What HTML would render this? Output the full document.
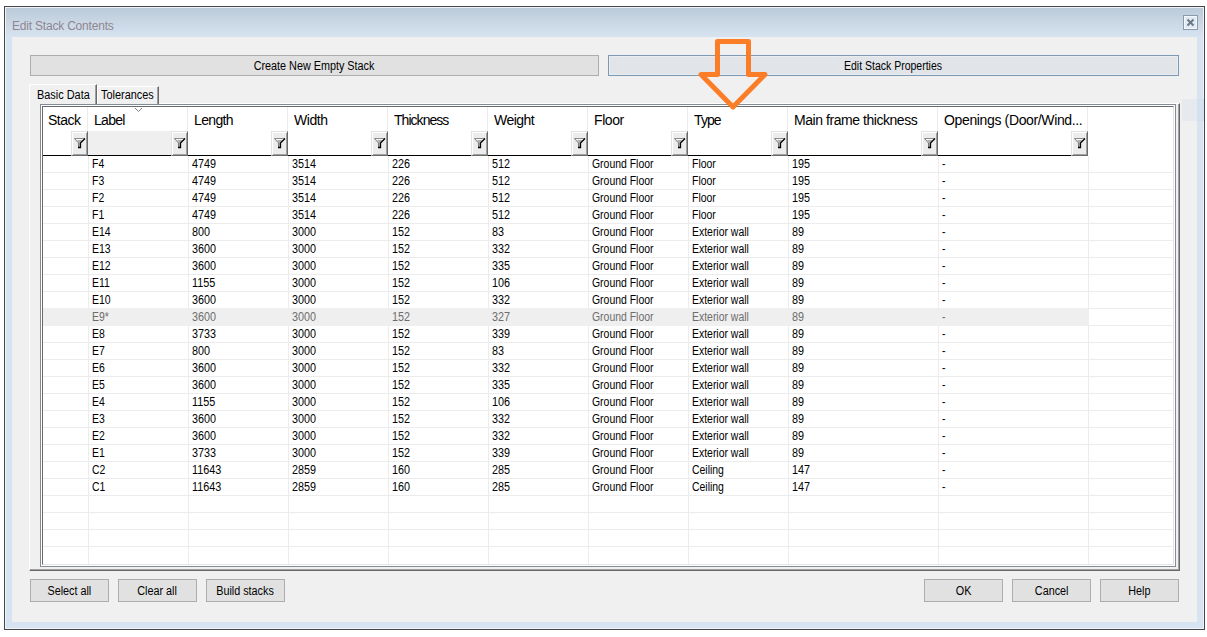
<!DOCTYPE html>
<html><head><meta charset="utf-8">
<style>
*{margin:0;padding:0;box-sizing:border-box}
html,body{width:1207px;height:637px;overflow:hidden;background:#fff;font-family:"Liberation Sans",sans-serif;position:relative}
div,span{position:absolute}
.t{white-space:nowrap;color:#000}
.frame{left:4px;top:6px;width:1201px;height:624px;border:1px solid #484848;background:#d6e3f1}
.hl{left:5px;top:7px;width:1199px;height:622px;border:1px solid #eef3f9}
.tbar{left:6px;top:8px;width:1197px;height:29px;background:linear-gradient(#bccbd9,#d7e3f0)}
.content{left:12px;top:37px;width:1185px;height:585px;background:#f0f0f0}
.title{left:12px;top:19px;font-size:12px;color:#8e8690;letter-spacing:-0.2px}
.close{left:1183px;top:15px;width:15px;height:15px;border:1px solid #8c99a6;background:#dfe9f4;box-shadow:inset 0 0 0 1px #f4f8fc}
.btn{border:1px solid #adadad;background:#e1e1e1;font-size:12px;text-align:center;color:#000;white-space:nowrap}
b.s{font-weight:normal;display:inline-block;transform:scaleX(0.9);transform-origin:50% 50%}
.btnd{border:1px solid #7c9ab4;background:#e1e4e8;box-shadow:inset 0 0 0 1px #eaecef}
.tab{font-size:12px;white-space:nowrap;background:#f0f0f0}
.grid{left:40px;top:104px;width:1136px;height:463px;border:1px solid #848b96;background:#fff}
.gin{left:42px;top:106px;width:1132px;height:459px;border-left:1px solid #6a6a6a;border-top:1px solid #6a6a6a;border-bottom:1px solid #e3e3e3;border-right:1px solid #e3e3e3}
.hd{font-size:14px;letter-spacing:-0.42px;top:112px;color:#000;white-space:nowrap}
.vl{width:1px;background:#ececec}
.hl2{height:1px;background:#ececec}
.fb{width:17px;height:25px;top:131px;background:#ececec;border-top:1px solid #e2e2e2;border-left:1px solid #e2e2e2;border-right:1px solid #6a6a6a;border-bottom:1px solid #6a6a6a;box-shadow:inset 1px 1px 0 #fff,inset -1px -1px 0 #a0a0a0}
.c{font-size:12px;white-space:nowrap;color:#000;top:0;transform-origin:0 0}
</style></head><body>
<div class="frame"></div>
<div class="hl"></div>
<div class="tbar"></div>
<div class="content"></div>
<div class="t title">Edit Stack Contents</div>
<div class="close"><svg width="13" height="13" style="position:absolute;left:0;top:0"><path d="M3.5 3.5L9.5 9.5M9.5 3.5L3.5 9.5" stroke="#6a7683" stroke-width="1.9"/></svg></div>
<div class="btn" style="left:30px;top:55px;width:569px;height:21px;line-height:21px"><b class="s">Create New Empty Stack</b></div>
<div class="btn btnd" style="left:608px;top:55px;width:571px;height:21px;line-height:21px"><b class="s" style="transform:scaleX(0.875)">Edit Stack Properties</b></div>

<div style="left:1182px;top:99px;width:15px;height:22px;background:#e6eaef"></div>
<div style="left:1197px;top:99px;width:7px;height:22px;background:#d2e0ef"></div>
<div style="left:29px;top:103px;width:1151px;height:468px;border-left:1px solid #fff;border-top:1px solid #fff;border-right:1px solid #696969;border-bottom:1px solid #696969;box-shadow:inset -1px -1px 0 #a0a0a0;background:#f0f0f0"></div>
<div class="tab" style="left:29px;top:84px;width:68px;height:21px;border-left:1px solid #fff;border-top:1px solid #fff;border-right:1px solid #696969;box-shadow:inset -1px 0 0 #a0a0a0;border-top-left-radius:2px"><span class="t" style="left:7px;top:3px;transform:scaleX(0.91);transform-origin:0 0">Basic Data</span></div>
<div class="tab" style="left:97px;top:86px;width:62px;height:18px;border-left:1px solid #fff;border-top:1px solid #fff;border-right:1px solid #696969;box-shadow:inset -1px 0 0 #a0a0a0"><span class="t" style="left:3px;top:1px;transform:scaleX(0.91);transform-origin:0 0">Tolerances</span></div>
<div class="grid"></div><div class="gin"></div>
<div style="left:88px;top:131px;width:100px;height:24px;background:#efefef"></div>
<div class="vl" style="left:87px;top:107px;height:24px"></div>
<div class="vl" style="left:88px;top:156px;height:408px"></div>
<div class="vl" style="left:187px;top:107px;height:24px"></div>
<div class="vl" style="left:188px;top:156px;height:408px"></div>
<div class="vl" style="left:287px;top:107px;height:24px"></div>
<div class="vl" style="left:288px;top:156px;height:408px"></div>
<div class="vl" style="left:387px;top:107px;height:24px"></div>
<div class="vl" style="left:388px;top:156px;height:408px"></div>
<div class="vl" style="left:487px;top:107px;height:24px"></div>
<div class="vl" style="left:488px;top:156px;height:408px"></div>
<div class="vl" style="left:587px;top:107px;height:24px"></div>
<div class="vl" style="left:588px;top:156px;height:408px"></div>
<div class="vl" style="left:687px;top:107px;height:24px"></div>
<div class="vl" style="left:688px;top:156px;height:408px"></div>
<div class="vl" style="left:787px;top:107px;height:24px"></div>
<div class="vl" style="left:788px;top:156px;height:408px"></div>
<div class="vl" style="left:937px;top:107px;height:24px"></div>
<div class="vl" style="left:938px;top:156px;height:408px"></div>
<div class="vl" style="left:1087px;top:107px;height:24px"></div>
<div class="vl" style="left:1088px;top:156px;height:408px"></div>
<div class="hl2" style="left:43px;top:172px;width:1131px"></div>
<div class="hl2" style="left:43px;top:189px;width:1131px"></div>
<div class="hl2" style="left:43px;top:206px;width:1131px"></div>
<div class="hl2" style="left:43px;top:223px;width:1131px"></div>
<div class="hl2" style="left:43px;top:240px;width:1131px"></div>
<div class="hl2" style="left:43px;top:257px;width:1131px"></div>
<div class="hl2" style="left:43px;top:274px;width:1131px"></div>
<div class="hl2" style="left:43px;top:291px;width:1131px"></div>
<div class="hl2" style="left:43px;top:308px;width:1131px"></div>
<div class="hl2" style="left:43px;top:325px;width:1131px"></div>
<div class="hl2" style="left:43px;top:342px;width:1131px"></div>
<div class="hl2" style="left:43px;top:359px;width:1131px"></div>
<div class="hl2" style="left:43px;top:376px;width:1131px"></div>
<div class="hl2" style="left:43px;top:393px;width:1131px"></div>
<div class="hl2" style="left:43px;top:410px;width:1131px"></div>
<div class="hl2" style="left:43px;top:427px;width:1131px"></div>
<div class="hl2" style="left:43px;top:444px;width:1131px"></div>
<div class="hl2" style="left:43px;top:461px;width:1131px"></div>
<div class="hl2" style="left:43px;top:478px;width:1131px"></div>
<div class="hl2" style="left:43px;top:495px;width:1131px"></div>
<div class="hl2" style="left:43px;top:512px;width:1131px"></div>
<div class="hl2" style="left:43px;top:529px;width:1131px"></div>
<div class="hl2" style="left:43px;top:546px;width:1131px"></div>
<div style="left:43px;top:308px;width:1046px;height:18px;background:#efefef"></div>
<div class="hd" style="left:48px;letter-spacing:-0.5px">Stack</div>
<div class="hd" style="left:94px;letter-spacing:-0.72px">Label</div>
<div class="hd" style="left:194px;letter-spacing:-0.66px">Length</div>
<div class="hd" style="left:294px;letter-spacing:-0.42px">Width</div>
<div class="hd" style="left:394px;letter-spacing:-0.96px">Thickness</div>
<div class="hd" style="left:494px;letter-spacing:-0.56px">Weight</div>
<div class="hd" style="left:594px;letter-spacing:-0.42px">Floor</div>
<div class="hd" style="left:694px;letter-spacing:-0.9px">Type</div>
<div class="hd" style="left:794px;letter-spacing:-0.45px">Main frame thickness</div>
<div class="hd" style="left:944px;letter-spacing:-0.36px">Openings (Door/Wind...</div>
<div style="left:43px;top:155px;width:1045px;height:1px;background:#000"></div>
<div class="fb" style="left:71px"><svg width="17" height="25" style="position:absolute;left:-1px;top:-1px"><path d="M3.5 7.5H14L9.5 12V16.5H7.5V12Z" fill="#fafafa"/><path d="M6 9H12L9 12V16H8V12Z" fill="#b0b0b0"/><path d="M3.5 7.5H14" stroke="#8a8a8a" stroke-width="1"/><path d="M3.5 7.5L7.5 12V16.5" fill="none" stroke="#7a7a7a" stroke-width="1"/><path d="M14 7.5L9.5 12V16.5H7" fill="none" stroke="#000" stroke-width="1.3"/></svg></div>
<div class="fb" style="left:171px"><svg width="17" height="25" style="position:absolute;left:-1px;top:-1px"><path d="M3.5 7.5H14L9.5 12V16.5H7.5V12Z" fill="#fafafa"/><path d="M6 9H12L9 12V16H8V12Z" fill="#b0b0b0"/><path d="M3.5 7.5H14" stroke="#8a8a8a" stroke-width="1"/><path d="M3.5 7.5L7.5 12V16.5" fill="none" stroke="#7a7a7a" stroke-width="1"/><path d="M14 7.5L9.5 12V16.5H7" fill="none" stroke="#000" stroke-width="1.3"/></svg></div>
<div class="fb" style="left:271px"><svg width="17" height="25" style="position:absolute;left:-1px;top:-1px"><path d="M3.5 7.5H14L9.5 12V16.5H7.5V12Z" fill="#fafafa"/><path d="M6 9H12L9 12V16H8V12Z" fill="#b0b0b0"/><path d="M3.5 7.5H14" stroke="#8a8a8a" stroke-width="1"/><path d="M3.5 7.5L7.5 12V16.5" fill="none" stroke="#7a7a7a" stroke-width="1"/><path d="M14 7.5L9.5 12V16.5H7" fill="none" stroke="#000" stroke-width="1.3"/></svg></div>
<div class="fb" style="left:371px"><svg width="17" height="25" style="position:absolute;left:-1px;top:-1px"><path d="M3.5 7.5H14L9.5 12V16.5H7.5V12Z" fill="#fafafa"/><path d="M6 9H12L9 12V16H8V12Z" fill="#b0b0b0"/><path d="M3.5 7.5H14" stroke="#8a8a8a" stroke-width="1"/><path d="M3.5 7.5L7.5 12V16.5" fill="none" stroke="#7a7a7a" stroke-width="1"/><path d="M14 7.5L9.5 12V16.5H7" fill="none" stroke="#000" stroke-width="1.3"/></svg></div>
<div class="fb" style="left:471px"><svg width="17" height="25" style="position:absolute;left:-1px;top:-1px"><path d="M3.5 7.5H14L9.5 12V16.5H7.5V12Z" fill="#fafafa"/><path d="M6 9H12L9 12V16H8V12Z" fill="#b0b0b0"/><path d="M3.5 7.5H14" stroke="#8a8a8a" stroke-width="1"/><path d="M3.5 7.5L7.5 12V16.5" fill="none" stroke="#7a7a7a" stroke-width="1"/><path d="M14 7.5L9.5 12V16.5H7" fill="none" stroke="#000" stroke-width="1.3"/></svg></div>
<div class="fb" style="left:571px"><svg width="17" height="25" style="position:absolute;left:-1px;top:-1px"><path d="M3.5 7.5H14L9.5 12V16.5H7.5V12Z" fill="#fafafa"/><path d="M6 9H12L9 12V16H8V12Z" fill="#b0b0b0"/><path d="M3.5 7.5H14" stroke="#8a8a8a" stroke-width="1"/><path d="M3.5 7.5L7.5 12V16.5" fill="none" stroke="#7a7a7a" stroke-width="1"/><path d="M14 7.5L9.5 12V16.5H7" fill="none" stroke="#000" stroke-width="1.3"/></svg></div>
<div class="fb" style="left:671px"><svg width="17" height="25" style="position:absolute;left:-1px;top:-1px"><path d="M3.5 7.5H14L9.5 12V16.5H7.5V12Z" fill="#fafafa"/><path d="M6 9H12L9 12V16H8V12Z" fill="#b0b0b0"/><path d="M3.5 7.5H14" stroke="#8a8a8a" stroke-width="1"/><path d="M3.5 7.5L7.5 12V16.5" fill="none" stroke="#7a7a7a" stroke-width="1"/><path d="M14 7.5L9.5 12V16.5H7" fill="none" stroke="#000" stroke-width="1.3"/></svg></div>
<div class="fb" style="left:771px"><svg width="17" height="25" style="position:absolute;left:-1px;top:-1px"><path d="M3.5 7.5H14L9.5 12V16.5H7.5V12Z" fill="#fafafa"/><path d="M6 9H12L9 12V16H8V12Z" fill="#b0b0b0"/><path d="M3.5 7.5H14" stroke="#8a8a8a" stroke-width="1"/><path d="M3.5 7.5L7.5 12V16.5" fill="none" stroke="#7a7a7a" stroke-width="1"/><path d="M14 7.5L9.5 12V16.5H7" fill="none" stroke="#000" stroke-width="1.3"/></svg></div>
<div class="fb" style="left:921px"><svg width="17" height="25" style="position:absolute;left:-1px;top:-1px"><path d="M3.5 7.5H14L9.5 12V16.5H7.5V12Z" fill="#fafafa"/><path d="M6 9H12L9 12V16H8V12Z" fill="#b0b0b0"/><path d="M3.5 7.5H14" stroke="#8a8a8a" stroke-width="1"/><path d="M3.5 7.5L7.5 12V16.5" fill="none" stroke="#7a7a7a" stroke-width="1"/><path d="M14 7.5L9.5 12V16.5H7" fill="none" stroke="#000" stroke-width="1.3"/></svg></div>
<div class="fb" style="left:1071px"><svg width="17" height="25" style="position:absolute;left:-1px;top:-1px"><path d="M3.5 7.5H14L9.5 12V16.5H7.5V12Z" fill="#fafafa"/><path d="M6 9H12L9 12V16H8V12Z" fill="#b0b0b0"/><path d="M3.5 7.5H14" stroke="#8a8a8a" stroke-width="1"/><path d="M3.5 7.5L7.5 12V16.5" fill="none" stroke="#7a7a7a" stroke-width="1"/><path d="M14 7.5L9.5 12V16.5H7" fill="none" stroke="#000" stroke-width="1.3"/></svg></div>
<div class="c" style="left:92px;top:157px;color:#000;transform:scaleX(0.87);">F4</div>
<div class="c" style="left:192px;top:157px;color:#000;transform:scaleX(0.9);">4749</div>
<div class="c" style="left:292px;top:157px;color:#000;transform:scaleX(0.9);">3514</div>
<div class="c" style="left:392px;top:157px;color:#000;transform:scaleX(0.9);">226</div>
<div class="c" style="left:492px;top:157px;color:#000;transform:scaleX(0.9);">512</div>
<div class="c" style="left:592px;top:157px;color:#000;transform:scaleX(0.87);">Ground Floor</div>
<div class="c" style="left:692px;top:157px;color:#000;transform:scaleX(0.87);">Floor</div>
<div class="c" style="left:792px;top:157px;color:#000;transform:scaleX(0.9);">195</div>
<div class="c" style="left:942px;top:157px;color:#000;transform:scaleX(0.87);">-</div>
<div class="c" style="left:92px;top:174px;color:#000;transform:scaleX(0.87);">F3</div>
<div class="c" style="left:192px;top:174px;color:#000;transform:scaleX(0.9);">4749</div>
<div class="c" style="left:292px;top:174px;color:#000;transform:scaleX(0.9);">3514</div>
<div class="c" style="left:392px;top:174px;color:#000;transform:scaleX(0.9);">226</div>
<div class="c" style="left:492px;top:174px;color:#000;transform:scaleX(0.9);">512</div>
<div class="c" style="left:592px;top:174px;color:#000;transform:scaleX(0.87);">Ground Floor</div>
<div class="c" style="left:692px;top:174px;color:#000;transform:scaleX(0.87);">Floor</div>
<div class="c" style="left:792px;top:174px;color:#000;transform:scaleX(0.9);">195</div>
<div class="c" style="left:942px;top:174px;color:#000;transform:scaleX(0.87);">-</div>
<div class="c" style="left:92px;top:191px;color:#000;transform:scaleX(0.87);">F2</div>
<div class="c" style="left:192px;top:191px;color:#000;transform:scaleX(0.9);">4749</div>
<div class="c" style="left:292px;top:191px;color:#000;transform:scaleX(0.9);">3514</div>
<div class="c" style="left:392px;top:191px;color:#000;transform:scaleX(0.9);">226</div>
<div class="c" style="left:492px;top:191px;color:#000;transform:scaleX(0.9);">512</div>
<div class="c" style="left:592px;top:191px;color:#000;transform:scaleX(0.87);">Ground Floor</div>
<div class="c" style="left:692px;top:191px;color:#000;transform:scaleX(0.87);">Floor</div>
<div class="c" style="left:792px;top:191px;color:#000;transform:scaleX(0.9);">195</div>
<div class="c" style="left:942px;top:191px;color:#000;transform:scaleX(0.87);">-</div>
<div class="c" style="left:92px;top:208px;color:#000;transform:scaleX(0.87);">F1</div>
<div class="c" style="left:192px;top:208px;color:#000;transform:scaleX(0.9);">4749</div>
<div class="c" style="left:292px;top:208px;color:#000;transform:scaleX(0.9);">3514</div>
<div class="c" style="left:392px;top:208px;color:#000;transform:scaleX(0.9);">226</div>
<div class="c" style="left:492px;top:208px;color:#000;transform:scaleX(0.9);">512</div>
<div class="c" style="left:592px;top:208px;color:#000;transform:scaleX(0.87);">Ground Floor</div>
<div class="c" style="left:692px;top:208px;color:#000;transform:scaleX(0.87);">Floor</div>
<div class="c" style="left:792px;top:208px;color:#000;transform:scaleX(0.9);">195</div>
<div class="c" style="left:942px;top:208px;color:#000;transform:scaleX(0.87);">-</div>
<div class="c" style="left:92px;top:225px;color:#000;transform:scaleX(0.87);">E14</div>
<div class="c" style="left:192px;top:225px;color:#000;transform:scaleX(0.9);">800</div>
<div class="c" style="left:292px;top:225px;color:#000;transform:scaleX(0.9);">3000</div>
<div class="c" style="left:392px;top:225px;color:#000;transform:scaleX(0.9);">152</div>
<div class="c" style="left:492px;top:225px;color:#000;transform:scaleX(0.9);">83</div>
<div class="c" style="left:592px;top:225px;color:#000;transform:scaleX(0.87);">Ground Floor</div>
<div class="c" style="left:692px;top:225px;color:#000;transform:scaleX(0.87);">Exterior wall</div>
<div class="c" style="left:792px;top:225px;color:#000;transform:scaleX(0.9);">89</div>
<div class="c" style="left:942px;top:225px;color:#000;transform:scaleX(0.87);">-</div>
<div class="c" style="left:92px;top:242px;color:#000;transform:scaleX(0.87);">E13</div>
<div class="c" style="left:192px;top:242px;color:#000;transform:scaleX(0.9);">3600</div>
<div class="c" style="left:292px;top:242px;color:#000;transform:scaleX(0.9);">3000</div>
<div class="c" style="left:392px;top:242px;color:#000;transform:scaleX(0.9);">152</div>
<div class="c" style="left:492px;top:242px;color:#000;transform:scaleX(0.9);">332</div>
<div class="c" style="left:592px;top:242px;color:#000;transform:scaleX(0.87);">Ground Floor</div>
<div class="c" style="left:692px;top:242px;color:#000;transform:scaleX(0.87);">Exterior wall</div>
<div class="c" style="left:792px;top:242px;color:#000;transform:scaleX(0.9);">89</div>
<div class="c" style="left:942px;top:242px;color:#000;transform:scaleX(0.87);">-</div>
<div class="c" style="left:92px;top:259px;color:#000;transform:scaleX(0.87);">E12</div>
<div class="c" style="left:192px;top:259px;color:#000;transform:scaleX(0.9);">3600</div>
<div class="c" style="left:292px;top:259px;color:#000;transform:scaleX(0.9);">3000</div>
<div class="c" style="left:392px;top:259px;color:#000;transform:scaleX(0.9);">152</div>
<div class="c" style="left:492px;top:259px;color:#000;transform:scaleX(0.9);">335</div>
<div class="c" style="left:592px;top:259px;color:#000;transform:scaleX(0.87);">Ground Floor</div>
<div class="c" style="left:692px;top:259px;color:#000;transform:scaleX(0.87);">Exterior wall</div>
<div class="c" style="left:792px;top:259px;color:#000;transform:scaleX(0.9);">89</div>
<div class="c" style="left:942px;top:259px;color:#000;transform:scaleX(0.87);">-</div>
<div class="c" style="left:92px;top:276px;color:#000;transform:scaleX(0.87);">E11</div>
<div class="c" style="left:192px;top:276px;color:#000;transform:scaleX(0.9);">1155</div>
<div class="c" style="left:292px;top:276px;color:#000;transform:scaleX(0.9);">3000</div>
<div class="c" style="left:392px;top:276px;color:#000;transform:scaleX(0.9);">152</div>
<div class="c" style="left:492px;top:276px;color:#000;transform:scaleX(0.9);">106</div>
<div class="c" style="left:592px;top:276px;color:#000;transform:scaleX(0.87);">Ground Floor</div>
<div class="c" style="left:692px;top:276px;color:#000;transform:scaleX(0.87);">Exterior wall</div>
<div class="c" style="left:792px;top:276px;color:#000;transform:scaleX(0.9);">89</div>
<div class="c" style="left:942px;top:276px;color:#000;transform:scaleX(0.87);">-</div>
<div class="c" style="left:92px;top:293px;color:#000;transform:scaleX(0.87);">E10</div>
<div class="c" style="left:192px;top:293px;color:#000;transform:scaleX(0.9);">3600</div>
<div class="c" style="left:292px;top:293px;color:#000;transform:scaleX(0.9);">3000</div>
<div class="c" style="left:392px;top:293px;color:#000;transform:scaleX(0.9);">152</div>
<div class="c" style="left:492px;top:293px;color:#000;transform:scaleX(0.9);">332</div>
<div class="c" style="left:592px;top:293px;color:#000;transform:scaleX(0.87);">Ground Floor</div>
<div class="c" style="left:692px;top:293px;color:#000;transform:scaleX(0.87);">Exterior wall</div>
<div class="c" style="left:792px;top:293px;color:#000;transform:scaleX(0.9);">89</div>
<div class="c" style="left:942px;top:293px;color:#000;transform:scaleX(0.87);">-</div>
<div class="c" style="left:92px;top:310px;color:#6d6d6d;transform:scaleX(0.87);">E9*</div>
<div class="c" style="left:192px;top:310px;color:#6d6d6d;transform:scaleX(0.9);">3600</div>
<div class="c" style="left:292px;top:310px;color:#6d6d6d;transform:scaleX(0.9);">3000</div>
<div class="c" style="left:392px;top:310px;color:#6d6d6d;transform:scaleX(0.9);">152</div>
<div class="c" style="left:492px;top:310px;color:#6d6d6d;transform:scaleX(0.9);">327</div>
<div class="c" style="left:592px;top:310px;color:#6d6d6d;transform:scaleX(0.87);">Ground Floor</div>
<div class="c" style="left:692px;top:310px;color:#6d6d6d;transform:scaleX(0.87);">Exterior wall</div>
<div class="c" style="left:792px;top:310px;color:#6d6d6d;transform:scaleX(0.9);">89</div>
<div class="c" style="left:942px;top:310px;color:#6d6d6d;transform:scaleX(0.87);">-</div>
<div class="c" style="left:92px;top:327px;color:#000;transform:scaleX(0.87);">E8</div>
<div class="c" style="left:192px;top:327px;color:#000;transform:scaleX(0.9);">3733</div>
<div class="c" style="left:292px;top:327px;color:#000;transform:scaleX(0.9);">3000</div>
<div class="c" style="left:392px;top:327px;color:#000;transform:scaleX(0.9);">152</div>
<div class="c" style="left:492px;top:327px;color:#000;transform:scaleX(0.9);">339</div>
<div class="c" style="left:592px;top:327px;color:#000;transform:scaleX(0.87);">Ground Floor</div>
<div class="c" style="left:692px;top:327px;color:#000;transform:scaleX(0.87);">Exterior wall</div>
<div class="c" style="left:792px;top:327px;color:#000;transform:scaleX(0.9);">89</div>
<div class="c" style="left:942px;top:327px;color:#000;transform:scaleX(0.87);">-</div>
<div class="c" style="left:92px;top:344px;color:#000;transform:scaleX(0.87);">E7</div>
<div class="c" style="left:192px;top:344px;color:#000;transform:scaleX(0.9);">800</div>
<div class="c" style="left:292px;top:344px;color:#000;transform:scaleX(0.9);">3000</div>
<div class="c" style="left:392px;top:344px;color:#000;transform:scaleX(0.9);">152</div>
<div class="c" style="left:492px;top:344px;color:#000;transform:scaleX(0.9);">83</div>
<div class="c" style="left:592px;top:344px;color:#000;transform:scaleX(0.87);">Ground Floor</div>
<div class="c" style="left:692px;top:344px;color:#000;transform:scaleX(0.87);">Exterior wall</div>
<div class="c" style="left:792px;top:344px;color:#000;transform:scaleX(0.9);">89</div>
<div class="c" style="left:942px;top:344px;color:#000;transform:scaleX(0.87);">-</div>
<div class="c" style="left:92px;top:361px;color:#000;transform:scaleX(0.87);">E6</div>
<div class="c" style="left:192px;top:361px;color:#000;transform:scaleX(0.9);">3600</div>
<div class="c" style="left:292px;top:361px;color:#000;transform:scaleX(0.9);">3000</div>
<div class="c" style="left:392px;top:361px;color:#000;transform:scaleX(0.9);">152</div>
<div class="c" style="left:492px;top:361px;color:#000;transform:scaleX(0.9);">332</div>
<div class="c" style="left:592px;top:361px;color:#000;transform:scaleX(0.87);">Ground Floor</div>
<div class="c" style="left:692px;top:361px;color:#000;transform:scaleX(0.87);">Exterior wall</div>
<div class="c" style="left:792px;top:361px;color:#000;transform:scaleX(0.9);">89</div>
<div class="c" style="left:942px;top:361px;color:#000;transform:scaleX(0.87);">-</div>
<div class="c" style="left:92px;top:378px;color:#000;transform:scaleX(0.87);">E5</div>
<div class="c" style="left:192px;top:378px;color:#000;transform:scaleX(0.9);">3600</div>
<div class="c" style="left:292px;top:378px;color:#000;transform:scaleX(0.9);">3000</div>
<div class="c" style="left:392px;top:378px;color:#000;transform:scaleX(0.9);">152</div>
<div class="c" style="left:492px;top:378px;color:#000;transform:scaleX(0.9);">335</div>
<div class="c" style="left:592px;top:378px;color:#000;transform:scaleX(0.87);">Ground Floor</div>
<div class="c" style="left:692px;top:378px;color:#000;transform:scaleX(0.87);">Exterior wall</div>
<div class="c" style="left:792px;top:378px;color:#000;transform:scaleX(0.9);">89</div>
<div class="c" style="left:942px;top:378px;color:#000;transform:scaleX(0.87);">-</div>
<div class="c" style="left:92px;top:395px;color:#000;transform:scaleX(0.87);">E4</div>
<div class="c" style="left:192px;top:395px;color:#000;transform:scaleX(0.9);">1155</div>
<div class="c" style="left:292px;top:395px;color:#000;transform:scaleX(0.9);">3000</div>
<div class="c" style="left:392px;top:395px;color:#000;transform:scaleX(0.9);">152</div>
<div class="c" style="left:492px;top:395px;color:#000;transform:scaleX(0.9);">106</div>
<div class="c" style="left:592px;top:395px;color:#000;transform:scaleX(0.87);">Ground Floor</div>
<div class="c" style="left:692px;top:395px;color:#000;transform:scaleX(0.87);">Exterior wall</div>
<div class="c" style="left:792px;top:395px;color:#000;transform:scaleX(0.9);">89</div>
<div class="c" style="left:942px;top:395px;color:#000;transform:scaleX(0.87);">-</div>
<div class="c" style="left:92px;top:412px;color:#000;transform:scaleX(0.87);">E3</div>
<div class="c" style="left:192px;top:412px;color:#000;transform:scaleX(0.9);">3600</div>
<div class="c" style="left:292px;top:412px;color:#000;transform:scaleX(0.9);">3000</div>
<div class="c" style="left:392px;top:412px;color:#000;transform:scaleX(0.9);">152</div>
<div class="c" style="left:492px;top:412px;color:#000;transform:scaleX(0.9);">332</div>
<div class="c" style="left:592px;top:412px;color:#000;transform:scaleX(0.87);">Ground Floor</div>
<div class="c" style="left:692px;top:412px;color:#000;transform:scaleX(0.87);">Exterior wall</div>
<div class="c" style="left:792px;top:412px;color:#000;transform:scaleX(0.9);">89</div>
<div class="c" style="left:942px;top:412px;color:#000;transform:scaleX(0.87);">-</div>
<div class="c" style="left:92px;top:429px;color:#000;transform:scaleX(0.87);">E2</div>
<div class="c" style="left:192px;top:429px;color:#000;transform:scaleX(0.9);">3600</div>
<div class="c" style="left:292px;top:429px;color:#000;transform:scaleX(0.9);">3000</div>
<div class="c" style="left:392px;top:429px;color:#000;transform:scaleX(0.9);">152</div>
<div class="c" style="left:492px;top:429px;color:#000;transform:scaleX(0.9);">332</div>
<div class="c" style="left:592px;top:429px;color:#000;transform:scaleX(0.87);">Ground Floor</div>
<div class="c" style="left:692px;top:429px;color:#000;transform:scaleX(0.87);">Exterior wall</div>
<div class="c" style="left:792px;top:429px;color:#000;transform:scaleX(0.9);">89</div>
<div class="c" style="left:942px;top:429px;color:#000;transform:scaleX(0.87);">-</div>
<div class="c" style="left:92px;top:446px;color:#000;transform:scaleX(0.87);">E1</div>
<div class="c" style="left:192px;top:446px;color:#000;transform:scaleX(0.9);">3733</div>
<div class="c" style="left:292px;top:446px;color:#000;transform:scaleX(0.9);">3000</div>
<div class="c" style="left:392px;top:446px;color:#000;transform:scaleX(0.9);">152</div>
<div class="c" style="left:492px;top:446px;color:#000;transform:scaleX(0.9);">339</div>
<div class="c" style="left:592px;top:446px;color:#000;transform:scaleX(0.87);">Ground Floor</div>
<div class="c" style="left:692px;top:446px;color:#000;transform:scaleX(0.87);">Exterior wall</div>
<div class="c" style="left:792px;top:446px;color:#000;transform:scaleX(0.9);">89</div>
<div class="c" style="left:942px;top:446px;color:#000;transform:scaleX(0.87);">-</div>
<div class="c" style="left:92px;top:463px;color:#000;transform:scaleX(0.87);">C2</div>
<div class="c" style="left:192px;top:463px;color:#000;transform:scaleX(0.9);">11643</div>
<div class="c" style="left:292px;top:463px;color:#000;transform:scaleX(0.9);">2859</div>
<div class="c" style="left:392px;top:463px;color:#000;transform:scaleX(0.9);">160</div>
<div class="c" style="left:492px;top:463px;color:#000;transform:scaleX(0.9);">285</div>
<div class="c" style="left:592px;top:463px;color:#000;transform:scaleX(0.87);">Ground Floor</div>
<div class="c" style="left:692px;top:463px;color:#000;transform:scaleX(0.87);">Ceiling</div>
<div class="c" style="left:792px;top:463px;color:#000;transform:scaleX(0.9);">147</div>
<div class="c" style="left:942px;top:463px;color:#000;transform:scaleX(0.87);">-</div>
<div class="c" style="left:92px;top:480px;color:#000;transform:scaleX(0.87);">C1</div>
<div class="c" style="left:192px;top:480px;color:#000;transform:scaleX(0.9);">11643</div>
<div class="c" style="left:292px;top:480px;color:#000;transform:scaleX(0.9);">2859</div>
<div class="c" style="left:392px;top:480px;color:#000;transform:scaleX(0.9);">160</div>
<div class="c" style="left:492px;top:480px;color:#000;transform:scaleX(0.9);">285</div>
<div class="c" style="left:592px;top:480px;color:#000;transform:scaleX(0.87);">Ground Floor</div>
<div class="c" style="left:692px;top:480px;color:#000;transform:scaleX(0.87);">Ceiling</div>
<div class="c" style="left:792px;top:480px;color:#000;transform:scaleX(0.9);">147</div>
<div class="c" style="left:942px;top:480px;color:#000;transform:scaleX(0.87);">-</div>
<svg width="10" height="6" style="position:absolute;left:134px;top:107px"><path d="M1 1L4.5 4.5L8 1" fill="none" stroke="#808080" stroke-width="1"/></svg>
<div class="btn" style="left:30px;top:579px;width:79px;height:23px;line-height:23px"><b class="s">Select all</b></div>
<div class="btn" style="left:118px;top:579px;width:79px;height:23px;line-height:23px"><b class="s">Clear all</b></div>
<div class="btn" style="left:206px;top:579px;width:79px;height:23px;line-height:23px"><b class="s">Build stacks</b></div>
<div class="btn" style="left:924px;top:579px;width:79px;height:23px;line-height:23px"><b class="s">OK</b></div>
<div class="btn" style="left:1012px;top:579px;width:79px;height:23px;line-height:23px"><b class="s">Cancel</b></div>
<div class="btn" style="left:1100px;top:579px;width:79px;height:23px;line-height:23px"><b class="s">Help</b></div>
<svg width="1207" height="637" style="position:absolute;left:0;top:0"><polygon points="717.5,41.5 748.5,41.5 748.5,74.5 765,74.5 733,107 701,74.5 717.5,74.5" fill="none" stroke="#fb7d27" stroke-width="5" stroke-linejoin="round"/></svg>
</body></html>
